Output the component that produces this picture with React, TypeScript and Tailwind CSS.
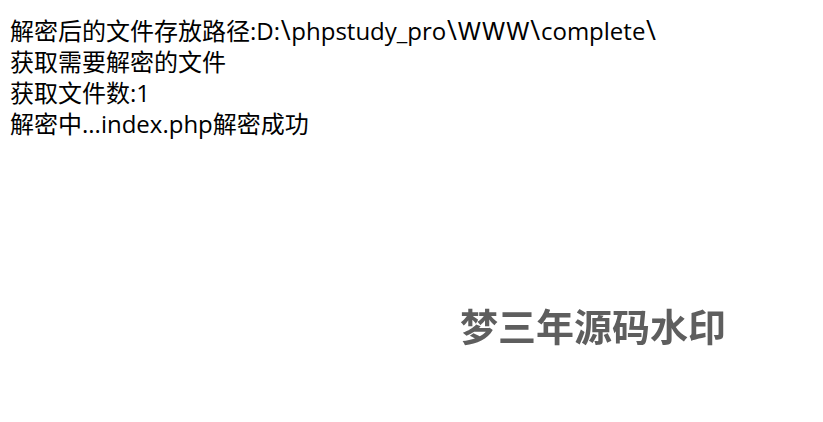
function Slash() {
	return <span className="mx-[0.7px] text-[27px] leading-none">\</span>;
}

export default function App() {
	return (
		<div className="relative h-[422px] w-[823px] bg-white font-['Open_Sans','Noto_Sans_CJK_SC',sans-serif] text-[24px] leading-[31px] text-black">
			<div className="pt-[15px] pl-[10px]">
				<div className="h-[31px] whitespace-nowrap">
					解密后的文件存放路径:D:<Slash />phpstudy_pro<Slash />
					<span className="font-['Inter']">WWW</span>
					<Slash />complete<Slash />
				</div>
				<div>获取需要解密的文件</div>
				<div>获取文件数:1</div>
				<div>解密中...index.php解密成功</div>
			</div>
			{/* watermark */}
			<div className="absolute left-[460px] top-[304px] text-[38px] leading-[44px] font-bold whitespace-nowrap text-[#5e5e5e] blur-[0.5px]">
				梦三年源码水印
			</div>
		</div>
	);
}
